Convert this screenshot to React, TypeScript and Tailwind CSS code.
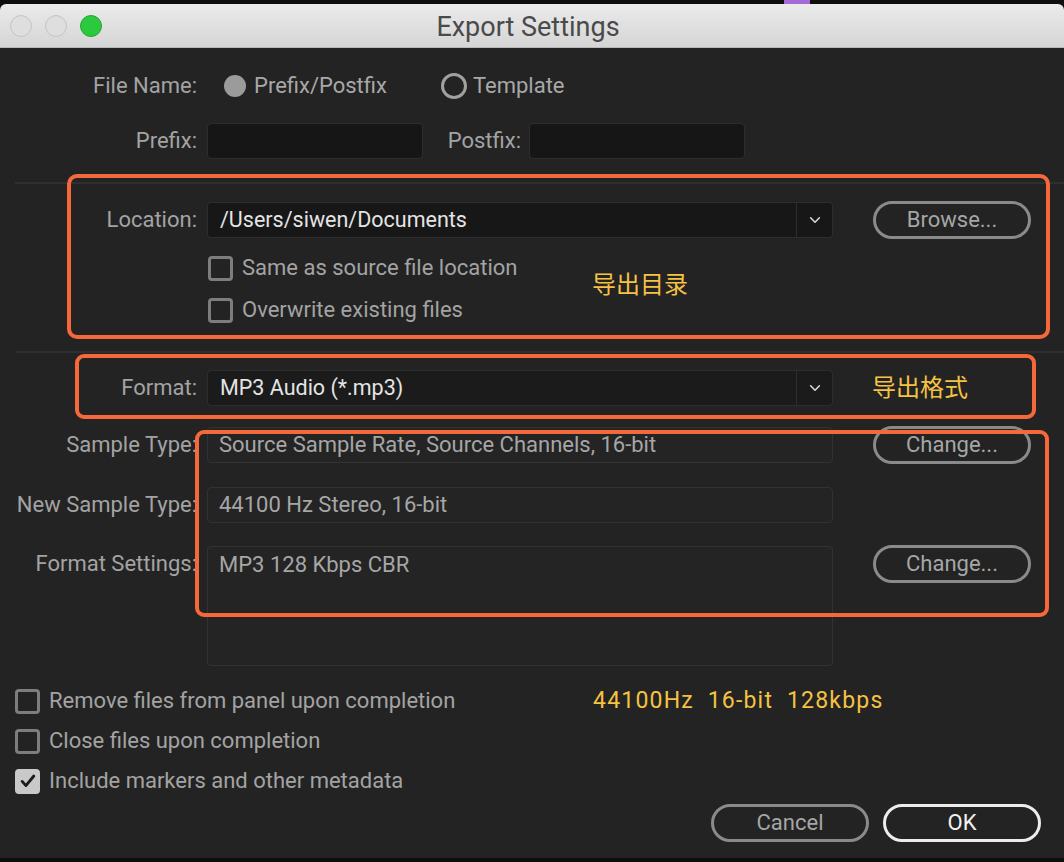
import type { ReactNode } from "react";

const font = { fontFamily: "Roboto, 'Noto Sans CJK SC', sans-serif" };

function Label({ children }: { children: ReactNode }) {
  return (
    <div className="w-[197px] shrink-0 text-right text-[22px] text-[#a3a3a3] whitespace-nowrap overflow-hidden">
      {children}
    </div>
  );
}

function Checkbox({ label, checked = false }: { label: string; checked?: boolean }) {
  return (
    <div className="flex items-center gap-[9px]">
      {checked ? (
        <div className="size-[25px] rounded-[4px] bg-[#c9c9c9] flex items-center justify-center">
          <svg viewBox="0 0 24 24" className="size-[20px]" fill="none" stroke="#1c1c1c" strokeWidth="3.4" strokeLinecap="round" strokeLinejoin="round">
            <path d="M5 12.5l4.5 5L19 6" />
          </svg>
        </div>
      ) : (
        <div className="size-[25px] rounded-[4px] border-[3px] border-[#7d7d7d]" />
      )}
      <span className="text-[22px] text-[#a3a3a3] whitespace-nowrap">{label}</span>
    </div>
  );
}

function PillButton({ children, primary = false }: { children: ReactNode; primary?: boolean }) {
  return (
    <div
      className={
        primary
          ? "w-[158px] h-[38px] rounded-full border-[3px] border-[#ececec] flex items-center justify-center text-[22px] text-[#f2f2f2]"
          : "w-[158px] h-[38px] rounded-full border-[3px] border-[#8a8a8a] flex items-center justify-center text-[22px] text-[#a6a6a6]"
      }
    >
      {children}
    </div>
  );
}

function Chevron() {
  return (
    <svg viewBox="0 0 16 16" className="size-[14px]" fill="none" stroke="#d8d8d8" strokeWidth="1.8" strokeLinecap="round" strokeLinejoin="round">
      <path d="M3 5.5l5 5 5-5" />
    </svg>
  );
}

function Select({ value, bg }: { value: string; bg: string }) {
  return (
    <div className={`w-[626px] h-[36px] rounded-[4px] border border-[#2d2d2d] ${bg} flex`}>
      <div className="flex-1 flex items-center pl-[12px] text-[21.5px] text-[#e4e4e4]">{value}</div>
      <div className="w-[36px] border-l border-[#2d2d2d] flex items-center justify-center">
        <Chevron />
      </div>
    </div>
  );
}

function ReadField({ value, tall = false }: { value: string; tall?: boolean }) {
  return (
    <div
      className={`w-[626px] ${tall ? "h-[120px] items-start pt-[3px]" : "h-[36px] items-center"} rounded-[4px] border border-[#323232] bg-[#242424] flex pl-[11px] text-[22px] text-[#a6a6a6]`}
    >
      {value}
    </div>
  );
}

export default function App() {
  return (
    <div className="w-[1064px] h-[862px] bg-[#0e0e0e] overflow-hidden leading-[30px]" style={font}>
      {/* top strip behind window */}
      <div className="h-[4px] flex">
        <div className="w-[784px]" />
        <div className="w-[26px] bg-[#a46ad8]" />
      </div>

      {/* title bar */}
      <div className="h-[44px] rounded-t-[6px] bg-gradient-to-b from-[#ebebeb] to-[#d5d5d5] border-b border-[#b9b9b9] flex items-center">
        <div className="flex items-center gap-[13px] pl-[10px]">
          <div className="size-[22px] rounded-full bg-[#dedede] border border-[#c4c4c4]" />
          <div className="size-[22px] rounded-full bg-[#dedede] border border-[#c4c4c4]" />
          <div className="size-[22px] rounded-full bg-[#2bc93e] border border-[#22a532]" />
        </div>
        <div className="flex-1 text-center pr-[110px] pt-[3px] text-[27px] text-[#4a4a4a]">Export Settings</div>
      </div>

      {/* body */}
      <div className="relative h-[810px] bg-[#232323] pt-[20px]">
        {/* File name */}
        <div className="flex items-center h-[36px]">
          <Label>File Name:</Label>
          <div className="flex items-center ml-[27px] gap-[8px]">
            <div className="size-[22px] rounded-full bg-[#9b9b9b]" />
            <span className="text-[22px] text-[#a8a8a8]">Prefix/Postfix</span>
          </div>
          <div className="flex items-center ml-[54px] gap-[6px]">
            <div className="size-[26px] rounded-full border-[3px] border-[#a0a0a0]" />
            <span className="text-[22px] text-[#a8a8a8]">Template</span>
          </div>
        </div>

        {/* Prefix / Postfix */}
        <div className="flex items-center h-[36px] mt-[19px]">
          <Label>Prefix:</Label>
          <div className="ml-[10px] w-[216px] h-[36px] rounded-[4px] border border-[#2d2d2d] bg-[#161616]" />
          <div className="ml-[20px] w-[78px] text-right text-[22px] text-[#a3a3a3]">Postfix:</div>
          <div className="ml-[8px] w-[216px] h-[36px] rounded-[4px] border border-[#2d2d2d] bg-[#161616]" />
        </div>

        <div className="ml-[15px] mt-[23px] h-[2px] bg-[#2f2f2f]" />

        {/* Location */}
        <div className="flex items-center h-[38px] mt-[17px]">
          <Label>Location:</Label>
          <div className="ml-[10px]">
            <Select value="/Users/siwen/Documents" bg="bg-[#171717]" />
          </div>
          <div className="ml-[40px]">
            <PillButton>Browse...</PillButton>
          </div>
        </div>
        <div className="ml-[208px] mt-[14px] flex flex-col gap-[12px]">
          <Checkbox label="Same as source file location" />
          <Checkbox label="Overwrite existing files" />
        </div>

        <div className="ml-[15px] mt-[26px] h-[2px] bg-[#2f2f2f]" />

        {/* Format */}
        <div className="flex items-center h-[36px] mt-[17px]">
          <Label>Format:</Label>
          <div className="ml-[10px]">
            <Select value="MP3 Audio (*.mp3)" bg="bg-[#1b1b1b]" />
          </div>
          <div className="ml-[39px] text-[24px] text-[#f5c243]">导出格式</div>
        </div>

        {/* Sample type */}
        <div className="flex items-center h-[38px] mt-[20px]">
          <Label>Sample Type:</Label>
          <div className="ml-[10px]">
            <ReadField value="Source Sample Rate, Source Channels, 16-bit" />
          </div>
          <div className="ml-[40px]">
            <PillButton>Change...</PillButton>
          </div>
        </div>

        <div className="flex items-center h-[36px] mt-[23px]">
          <Label>New Sample Type:</Label>
          <div className="ml-[10px]">
            <ReadField value="44100 Hz Stereo, 16-bit" />
          </div>
        </div>

        <div className="flex items-start mt-[23px]">
          <div className="pt-[3px]">
            <Label>Format Settings:</Label>
          </div>
          <div className="ml-[10px]">
            <ReadField value="MP3 128 Kbps CBR" tall />
          </div>
          <div className="ml-[40px] -mt-[1px]">
            <PillButton>Change...</PillButton>
          </div>
        </div>

        {/* bottom options */}
        <div className="ml-[15px] mt-[20px] flex flex-col gap-[10px]">
          <div className="flex items-center">
            <div className="w-[578px]">
              <Checkbox label="Remove files from panel upon completion" />
            </div>
            <div className="text-[23px] tracking-[1.2px] text-[#f5c243] whitespace-pre">44100Hz  16-bit  128kbps</div>
          </div>
          <Checkbox label="Close files upon completion" />
          <Checkbox label="Include markers and other metadata" checked />
        </div>

        <div className="flex justify-end gap-[14px] pr-[23px] mt-[8px]">
          <PillButton>Cancel</PillButton>
          <PillButton primary>OK</PillButton>
        </div>

        {/* annotations */}
        <div className="absolute left-[67px] top-[126px] w-[983px] h-[165px] rounded-[10px] border-[4px] border-[#f4683a] pointer-events-none" />
        <div className="absolute left-[592px] top-[222px] text-[24px] text-[#f5c243]">导出目录</div>
        <div className="absolute left-[75px] top-[306px] w-[961px] h-[65px] rounded-[9px] border-[4px] border-[#f4683a] pointer-events-none" />
        <div className="absolute left-[195px] top-[382px] w-[854px] h-[187px] rounded-[9px] border-[4px] border-[#f4683a] pointer-events-none" />
      </div>
    </div>
  );
}
